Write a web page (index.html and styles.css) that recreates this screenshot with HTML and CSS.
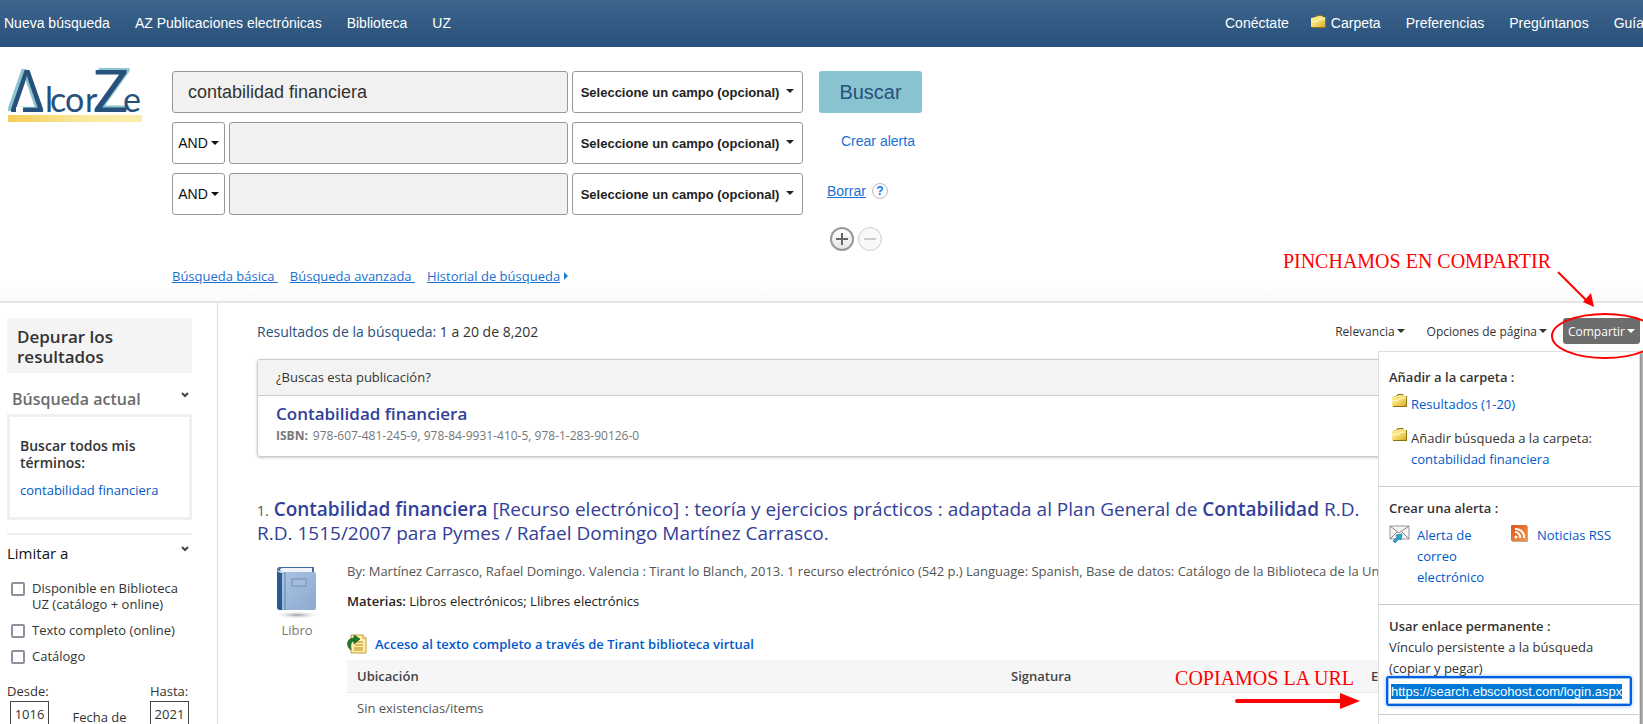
FILE: index.html
```html
<!DOCTYPE html>
<html lang="es">
<head>
<meta charset="utf-8">
<title>AlcorZe - Resultados</title>
<link rel="stylesheet" href="styles.css">
</head>
<body>
<svg class="defs" aria-hidden="true">
  <defs>
    <linearGradient id="gold" x1="0" y1="0" x2="1" y2="1"><stop offset="0" stop-color="#fff3a8"/><stop offset="0.5" stop-color="#f6dd70"/><stop offset="1" stop-color="#dfa82c"/></linearGradient>
    <linearGradient id="bar" x1="0" y1="0" x2="1" y2="0"><stop offset="0" stop-color="#f4cd57"/><stop offset="0.6" stop-color="#faeaa0"/><stop offset="1" stop-color="#fbedaa"/></linearGradient>
    <linearGradient id="cover" x1="0" y1="0" x2="1" y2="1"><stop offset="0" stop-color="#a9c3e2"/><stop offset="1" stop-color="#8caad0"/></linearGradient>
    <linearGradient id="rss" x1="0" y1="0" x2="1" y2="1"><stop offset="0" stop-color="#d9531e"/><stop offset="1" stop-color="#f39a4a"/></linearGradient>
    <radialGradient id="shade"><stop offset="0" stop-color="#9a9a9a"/><stop offset="1" stop-color="#ffffff" stop-opacity="0"/></radialGradient>
    <symbol id="folder" viewBox="0 0 16 14">
      <path d="M1 13V3l3-1 2-2h5l1 2h3v11z" fill="#8a7410"/>
      <path d="M0 12V3l5-1 2-1h4l1 1h2v10z" fill="url(#gold)"/>
      <path d="M0 7l7-1 2-2h5" fill="none" stroke="#fffbd0"/>
    </symbol>
  </defs>
</svg>

<header class="topbar">
  <nav class="topbar-nav">
    <a href="#">Nueva búsqueda</a><a href="#">AZ Publicaciones electrónicas</a><a href="#">Biblioteca</a><a href="#">UZ</a>
  </nav>
  <nav class="topbar-nav topbar-user">
    <a href="#">Conéctate</a><a href="#" class="with-folder"><svg class="folder" aria-hidden="true"><use href="#folder"/></svg>Carpeta</a><a href="#">Preferencias</a><a href="#">Pregúntanos</a><a href="#">Guía</a>
  </nav>
</header>

<section class="search">
  <a href="#" class="logo" aria-label="AlcorZe">
    <svg viewBox="0 0 134 58" width="134" height="58">
      <g class="logo-shadow"><text class="logo-delta" x="-1" y="44">Δ</text><text class="logo-z" x="88" y="43">Z</text></g>
      <g class="logo-ink"><text class="logo-delta" x="2" y="45">Δ</text><text class="logo-z" x="85" y="45">Z</text><text class="logo-low" x="37 42 57 77 115" y="45">lcore</text></g>
      <rect x="8" y="40" width="7" height="6" fill="#fff"/>
      <rect x="0" y="48" width="134" height="7" fill="url(#bar)"/>
    </svg>
  </a>
  <form class="search-form">
    <div class="fields">
      <div class="row">
        <input class="term" type="text" aria-label="Término 1" value="contabilidad financiera">
        <button type="button" class="field-btn">Seleccione un campo (opcional)<i class="caret"></i></button>
      </div>
      <div class="row">
        <button type="button" class="bool-btn">AND<i class="caret"></i></button>
        <input class="term" type="text" aria-label="Término 2">
        <button type="button" class="field-btn">Seleccione un campo (opcional)<i class="caret"></i></button>
      </div>
      <div class="row">
        <button type="button" class="bool-btn">AND<i class="caret"></i></button>
        <input class="term" type="text" aria-label="Término 3">
        <button type="button" class="field-btn">Seleccione un campo (opcional)<i class="caret"></i></button>
      </div>
      <nav class="modes">
        <a href="#">Búsqueda básica&nbsp;</a><a href="#">Búsqueda avanzada&nbsp;</a><a href="#">Historial de búsqueda</a><i class="play"></i>
      </nav>
    </div>
    <div class="actions">
      <button type="button" class="submit">Buscar</button>
      <a href="#" class="alert-link">Crear alerta</a>
      <div class="clear"><a href="#">Borrar</a><button type="button" class="help">?</button></div>
      <div class="rows-ctl">
        <button type="button" class="round" aria-label="Añadir fila"><svg width="12" height="12"><path d="M6 0v12M0 6h12" stroke="#666" stroke-width="2"/></svg></button>
        <button type="button" class="round off" aria-label="Quitar fila"><svg width="12" height="12"><path d="M0 6h12" stroke="#ccc" stroke-width="2"/></svg></button>
      </div>
    </div>
  </form>
</section>

<div class="content">
  <aside class="sidebar">
    <h2 class="refine">Depurar los resultados</h2>
    <div class="side-head"><h3>Búsqueda actual</h3><svg class="chev" viewBox="0 0 8 6"><path d="M1 1l3 3 3-3" fill="none" stroke="#444" stroke-width="2"/></svg></div>
    <div class="current">
      <h4>Buscar todos mis términos:</h4>
      <a href="#">contabilidad financiera</a>
    </div>
    <div class="limit-head"><h3>Limitar a</h3><svg class="chev" viewBox="0 0 8 6"><path d="M1 1l3 3 3-3" fill="none" stroke="#444" stroke-width="2"/></svg></div>
    <div class="checks">
      <label><input type="checkbox"><span>Disponible en Biblioteca UZ (catálogo + online)</span></label>
      <label><input type="checkbox"><span>Texto completo (online)</span></label>
      <label><input type="checkbox"><span>Catálogo</span></label>
    </div>
    <div class="dates">
      <label class="from">Desde:<input type="text" value="1016"></label>
      <span>Fecha de</span>
      <label>Hasta:<input type="text" value="2021"></label>
    </div>
  </aside>

  <main class="results">
    <div class="toolbar">
      <h1><b>Resultados de la búsqueda:</b> 1 a 20 de 8,202</h1>
      <div class="tools">
        <button type="button">Relevancia<i class="caret"></i></button>
        <button type="button">Opciones de página<i class="caret"></i></button>
        <button type="button" class="share">Compartir<i class="caret"></i></button>
      </div>
    </div>

    <section class="pub">
      <p class="pub-q">¿Buscas esta publicación?</p>
      <div class="pub-body">
        <h2><a href="#">Contabilidad financiera</a></h2>
        <p><b>ISBN:</b>978-607-481-245-9, 978-84-9931-410-5, 978-1-283-90126-0</p>
      </div>
    </section>

    <article class="record">
      <h2><span class="num">1.</span> <a href="#"><b>Contabilidad financiera</b> [Recurso electrónico] : teoría y ejercicios prácticos : adaptada al Plan General de <b>Contabilidad</b> R.D.<br>R.D. 1515/2007 para Pymes / Rafael Domingo Martínez Carrasco.</a></h2>
      <div class="record-body">
        <figure>
          <svg width="52" height="56" viewBox="0 0 52 56">
            <ellipse cx="26" cy="51" rx="24" ry="4" fill="url(#shade)"/>
            <path d="M6 6q0-3 3-3h34v5H10z" fill="#3f6ea6"/>
            <path d="M9 6q0-2 3-2h29v4H10z" fill="#eef3f8"/>
            <path d="M6 6q1 3 6 3v37H9q-3 0-3-3z" fill="#295a94"/>
            <path d="M11 8h32q2 0 2 2v34q0 2-2 2H11z" fill="url(#cover)"/>
            <path d="M14 8v38" stroke="#5c86b7"/>
            <rect x="21" y="15" width="14" height="7" fill="#a3bddb" stroke="#7590b0"/>
          </svg>
          <figcaption>Libro</figcaption>
        </figure>
        <div class="details">
          <p class="by">By: Martínez Carrasco, Rafael Domingo. Valencia : Tirant lo Blanch, 2013. 1 recurso electrónico (542 p.) Language: Spanish, Base de datos: Catálogo de la Biblioteca de la Universidad</p>
          <p class="subjects"><b>Materias:</b> Libros electrónicos; Llibres electrónics</p>
          <a href="#" class="fulltext">
            <svg width="20" height="20" viewBox="0 0 20 20" aria-hidden="true">
              <path d="M4 1h12l3 3v15H4z" fill="#fdf0a2" stroke="#c9993a"/>
              <path d="M16 1v3h3" fill="#fff" stroke="#c9993a"/>
              <path d="M9 8h7M8 11h8M7 14h9M7 16h9" stroke="#b98225"/>
              <path d="M4 16C-1 13-1 4 7 4V1l6 4-6 5V7C3 8 3 12 4 16z" fill="#1f7a2c" stroke="#0e4d18" stroke-width="0.6"/>
            </svg>Acceso al texto completo a través de Tirant biblioteca virtual</a>
          <table>
            <thead><tr><th>Ubicación</th><th>Signatura</th><th>Estado</th></tr></thead>
            <tbody><tr><td>Sin existencias/items</td><td></td><td></td></tr></tbody>
          </table>
        </div>
      </div>
    </article>

    <div class="share-panel">
      <section>
        <h3>Añadir a la carpeta :</h3>
        <div class="item"><svg class="folder" aria-hidden="true"><use href="#folder"/></svg><p><a href="#">Resultados (1-20)</a></p></div>
        <div class="item"><svg class="folder" aria-hidden="true"><use href="#folder"/></svg><p>Añadir búsqueda a la carpeta: <a href="#">contabilidad financiera</a></p></div>
      </section>
      <section>
        <h3>Crear una alerta :</h3>
        <div class="alerts">
          <svg width="22" height="20" viewBox="0 0 22 20" aria-hidden="true">
            <path d="M1 1h19v13H1z" fill="#f4f4f4" stroke="#999"/>
            <path d="M1 1l9 7 10-7M1 14l7-7M20 14l-7-7" fill="none" stroke="#888"/>
            <path d="M13 9l-1 6-2-1-4 4-2-2 4-4-1-2z" fill="#2aa3c9" stroke="#14779a" stroke-width="0.6"/>
          </svg>
          <a href="#">Alerta de correo electrónico</a>
          <svg width="18" height="18" viewBox="0 0 18 18" aria-hidden="true">
            <rect x="1" y="1" width="16" height="16" rx="1" fill="#b9a79a"/>
            <rect width="16" height="16" rx="1" fill="url(#rss)"/>
            <circle cx="5" cy="12" r="1.5" fill="#fff"/>
            <path d="M4 7a5 5 0 0 1 5 6M4 4a8 8 0 0 1 9 9" fill="none" stroke="#fff" stroke-width="2"/>
          </svg>
          <a href="#">Noticias RSS</a>
        </div>
      </section>
      <section class="perma">
        <h3>Usar enlace permanente :</h3>
        <label for="permalink">Vínculo persistente a la búsqueda (copiar y pegar)</label>
        <input id="permalink" type="text" value="https://search.ebscohost.com/login.aspx">
      </section>
    </div>

    <div class="note note-share">PINCHAMOS EN COMPARTIR</div>
    <svg class="note-ring" width="120" height="94" viewBox="0 0 120 94" aria-hidden="true">
      <path d="M15 7l29 29" stroke="#f00" stroke-width="2"/>
      <path d="M51 42L40 37l8-9z" fill="#f00"/>
      <ellipse cx="62" cy="71" rx="53" ry="22" fill="none" stroke="#f00" stroke-width="2"/>
    </svg>
    <div class="note note-url">COPIAMOS LA URL</div>
    <svg class="note-arrow" width="126" height="18" viewBox="0 0 126 18" aria-hidden="true">
      <path d="M3 9h104" stroke="#f00" stroke-width="4" stroke-linecap="round"/>
      <path d="M106 1l20 8-20 8z" fill="#f00"/>
    </svg>
  </main>
</div>
<script src="script.js"></script>
</body>
</html>
```

FILE: styles.css
```css
* { box-sizing: border-box; }
body {
  margin: 0;
  height: 100vh;
  overflow: hidden;
  display: flex;
  flex-direction: column;
  background: #fff;
  color: #333;
  font-family: "Open Sans", "Noto Sans", sans-serif;
  font-size: 13px;
}
h1, h2, h3, h4, p, figure { margin: 0; }
a { color: #0059c9; text-decoration: none; }
button, input { font: inherit; color: inherit; margin: 0; }
.defs { position: absolute; width: 0; height: 0; }
.folder { width: 16px; height: 14px; flex: none; }

.caret {
  display: inline-block;
  border: 4px solid transparent;
  border-top-color: currentColor;
  border-bottom: 0;
  margin-left: 3px;
  vertical-align: 3px;
}

.topbar {
  flex: none;
  height: 47px;
  padding-bottom: 2px;
  display: flex;
  justify-content: space-between;
  align-items: center;
  background: linear-gradient(#3e648b, #27517b);
  font-family: "Liberation Sans", Arial, sans-serif;
  font-size: 14px;
}
.topbar-nav { display: flex; gap: 25px; padding-left: 4px; white-space: nowrap; }
.topbar-nav a { color: #fff; }
.topbar-user { width: 422px; overflow: hidden; }
.with-folder { display: flex; gap: 4px; margin-left: -3px; }

.search {
  flex: none;
  display: flex;
  padding: 24px 0 16px;
  border-bottom: 2px solid #e5e5e5;
  background: linear-gradient(#fff 94%, #fafafa);
  font-family: "Liberation Sans", Arial, sans-serif;
  font-size: 14px;
}
.logo { width: 172px; padding-left: 8px; flex: none; margin-top: -4px; }
.logo svg { display: block; }
.logo-delta { font: 59px "Open Sans", sans-serif; }
.logo-z { font: 59px Lato, sans-serif; }
.logo-low { font: 34px Lato, sans-serif; }
.logo-ink { fill: #27517b; }
.logo-shadow { fill: #8cc4cf; }

.search-form { display: flex; gap: 16px; }
.fields { width: 631px; display: flex; flex-direction: column; gap: 9px; }
.row { display: flex; gap: 4px; height: 42px; }
.row > * { border: 1px solid #999; border-radius: 3px; }
.term { flex: 1; min-width: 0; background: #f1f1f1; font-size: 18px; padding: 0 15px; }
.field-btn { width: 231px; background: #fff; font-weight: bold; color: #222; padding: 0; font-size: 13px; white-space: nowrap; }
.field-btn .caret { margin-left: 7px; vertical-align: 4px; }
.bool-btn { width: 53px; background: #fff; color: #111; padding: 0; }
.modes {
  display: flex;
  align-items: center;
  gap: 12px;
  margin-top: 43px;
  font: 13px/18px "Open Sans", sans-serif;
}
.modes a, .clear a { color: #1a70d2; text-decoration: underline; }
.play { border: 4px solid transparent; border-left-color: #1a85d8; border-right: 0; margin-left: -8px; }

.actions { display: flex; flex-direction: column; align-items: flex-start; }
.submit { width: 103px; height: 42px; border: 0; border-radius: 3px; background: #8ac3d0; color: #27517b; font-size: 20px; }
.alert-link { margin: 20px 0 0 22px; color: #1a70d2; line-height: 16px; }
.clear { display: flex; align-items: center; gap: 6px; margin: 34px 0 0 8px; }
.help { width: 16px; height: 16px; padding: 0; border: 1px solid #bbb; border-radius: 50%; background: #fff; color: #1a73e8; font-weight: bold; font-size: 12px; line-height: 14px; }
.rows-ctl { display: flex; gap: 4px; margin: 28px 0 0 11px; }
.round { width: 24px; height: 24px; padding: 0; display: grid; place-items: center; border: 2px solid #999; border-radius: 50%; background: linear-gradient(#fff, #e6e6e6); }
.round.off { border: 1px solid #ccc; background: #f8f8f8; }

.content { flex: 1; min-height: 0; display: flex; }
.sidebar { flex: none; width: 218px; border-right: 1px solid #ddd; padding: 15px 25px 0 7px; }
.refine { background: #f4f4f4; padding: 9px 10px 6px; font-size: 17px; line-height: 20px; font-weight: 600; padding-right: 60px; }
.side-head { display: flex; justify-content: space-between; padding: 14px 3px 3px 5px; }
.side-head h3 { font-size: 16px; line-height: 24px; font-weight: 600; color: #6b6b6b; }
.chev { width: 8px; height: 6px; margin-top: 5px; }
.current { border: 3px solid #efefef; padding: 20px 10px 17px; }
.current h4 { font-size: 14px; line-height: 17px; font-weight: 600; }
.current a { display: block; margin-top: 9px; line-height: 20px; }
.limit-head { display: flex; justify-content: space-between; margin-top: 13px; padding: 6px 3px 0 0; border-top: 2px solid #efefef; }
.limit-head h3 { font-size: 15px; line-height: 24px; font-weight: normal; color: #111; }
.checks { display: flex; flex-direction: column; gap: 10px; padding: 15px 0 0 4px; line-height: 16px; }
.checks label { display: flex; gap: 7px; }
.checks input { appearance: none; flex: none; width: 14px; height: 14px; margin-top: 2px; border: 2px solid #8f8f9d; border-radius: 2px; background: #fff; }
.dates { display: flex; justify-content: space-between; padding: 18px 3px 0 0; line-height: 18px; }
.dates label { display: flex; flex-direction: column; gap: 1px; }
.dates input { width: 39px; height: 26px; padding: 0; border: 1px solid #444; text-align: center; }
.dates .from input { margin-left: 3px; }
.dates span { margin-top: 26px; }

.results { flex: 1; min-width: 0; position: relative; padding: 15px 3px 0 39px; }
.toolbar { display: flex; justify-content: space-between; align-items: center; }
.toolbar h1 { font-size: 14px; font-weight: normal; color: #333; }
.toolbar h1 b { font-weight: normal; color: #27517b; }
.tools { display: flex; gap: 10px; font-size: 12px; }
.tools button { height: 26px; padding: 0 6px; border: 0; border-radius: 3px; background: none; white-space: nowrap; }
.tools .share { padding: 0 5px; background: #6d6d6d; color: #fff; }
.tools .caret { margin-left: 2px; }

.pub { margin-top: 15px; border: 1px solid #ccc; border-radius: 3px; box-shadow: 0 1px 3px #ccc; height: 98px; }
.pub-q { background: #f3f3f3; border-bottom: 1px solid #ccc; padding: 0 18px; line-height: 35px; }
.pub-body { padding: 6px 18px 0; }
.pub h2 { font-size: 17px; line-height: 24px; font-weight: 600; }
.pub h2 a, .record h2 a { color: #32409a; }
.pub-body p { margin-top: 2px; font-size: 12px; line-height: 16px; color: #777; }
.pub-body b { margin-right: 5px; }

.record { margin-top: 40px; }
.record h2 { font-size: 19px; line-height: 24px; font-weight: normal; white-space: nowrap; overflow: hidden; }
.record h2 b { font-weight: 600; }
.record .num { font-size: 14px; line-height: 1; color: #555; }
.record-body { display: flex; margin-top: 16px; }
figure { flex: none; width: 90px; padding: 3px 0 0 14px; color: #777; }
figure svg { display: block; }
figcaption { width: 52px; margin-top: 1px; line-height: 18px; text-align: center; }
.details { flex: 1; min-width: 0; }
.by { color: #555; line-height: 20px; white-space: nowrap; overflow: hidden; }
.subjects { color: #222; line-height: 20px; margin-top: 10px; }
.subjects b { font-weight: 600; }
.fulltext { display: flex; align-items: center; gap: 8px; margin-top: 21px; line-height: 24px; font-weight: 600; }
table { width: 100%; table-layout: fixed; border-collapse: collapse; color: #555; margin-top: 4px; }
th, td { height: 32px; padding: 0 10px; text-align: left; border-bottom: 1px solid #e8e8e8; }
th { background: #f6f6f6; color: #444; font-weight: 600; }
th:first-child { width: 654px; }
th:nth-child(2) { width: 360px; }

.share-panel {
  position: absolute;
  top: 48px;
  right: 3px;
  bottom: -8px;
  width: 262px;
  background: #fff;
  border: 1px solid #ddd;
  box-shadow: 3px 2px 2px #999;
  line-height: 21px;
}
.share-panel section { border-bottom: 1px solid #ccc; padding: 11px 10px 16px; }
.share-panel section:first-child { padding-top: 15px; }
.share-panel h3 { font-size: 13px; font-weight: 600; }
.item { display: flex; gap: 3px; padding-left: 3px; margin-top: 6px; }
.item + .item { margin-top: 13px; }
.item a { white-space: nowrap; }
.alerts { display: grid; grid-template-columns: 22px 88px 18px 1fr; column-gap: 6px; margin-top: 6px; }
.alerts a:last-child { padding-left: 2px; }
.perma label { display: block; }
.share-panel .perma { padding-bottom: 8px; }
#permalink {
  display: block;
  width: 246px;
  height: 30px;
  margin: -3px 0 0 -3px;
  padding: 0 3px;
  border: 2px solid #0060df;
  border-radius: 3px;
  outline: 0;
  box-shadow: inset 0 0 0 1px #9cc3f2, 0 0 4px #9cc3f2;
  font: 13px "Liberation Sans", Arial, sans-serif;
}
#permalink::selection { background: #0078d7; color: #fff; }

.note { position: absolute; color: #f00; font: 20px/24px "Liberation Serif", "Times New Roman", serif; white-space: nowrap; }
.note-share { top: -54px; right: 92px; }
.note-ring { position: absolute; top: -38px; right: -20px; }
.note-url { top: 363px; right: 289px; }
.note-arrow { position: absolute; top: 389px; right: 283px; }
```

FILE: script.js
```js
const link = document.getElementById('permalink');
link.focus({ preventScroll: true });
link.select();
```
